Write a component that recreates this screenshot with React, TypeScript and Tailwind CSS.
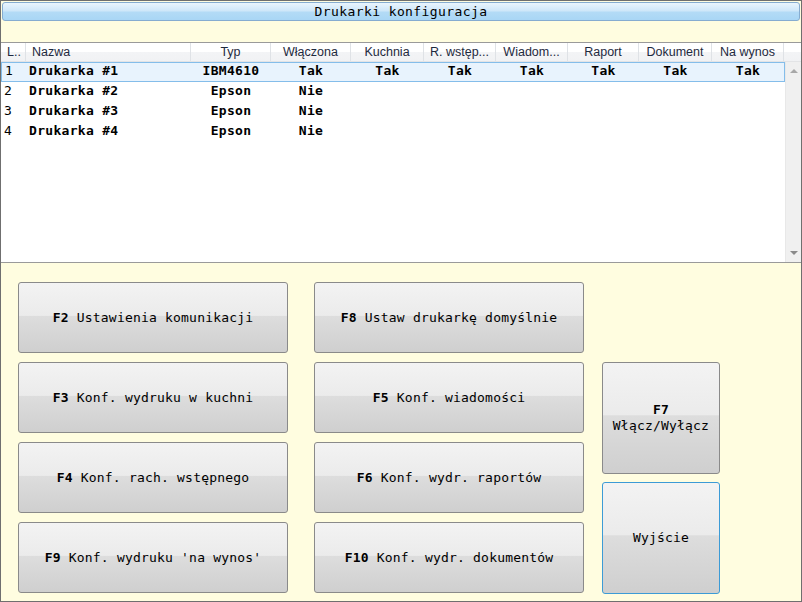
import React from "react";

const cols = [
  { label: "L..", w: 25, align: "left" },
  { label: "Nazwa", w: 165, align: "left" },
  { label: "Typ", w: 80, align: "center" },
  { label: "Włączona", w: 80, align: "center" },
  { label: "Kuchnia", w: 73, align: "center" },
  { label: "R. wstęp...", w: 72, align: "center" },
  { label: "Wiadom...", w: 72, align: "center" },
  { label: "Raport", w: 71, align: "center" },
  { label: "Dokument", w: 73, align: "center" },
  { label: "Na wynos", w: 72, align: "center" },
];

const rows = [
  ["1", "Drukarka #1", "IBM4610", "Tak", "Tak", "Tak", "Tak", "Tak", "Tak", "Tak"],
  ["2", "Drukarka #2", "Epson", "Nie", "", "", "", "", "", ""],
  ["3", "Drukarka #3", "Epson", "Nie", "", "", "", "", "", ""],
  ["4", "Drukarka #4", "Epson", "Nie", "", "", "", "", "", ""],
];

const mono = "font-['DejaVu_Sans_Mono',monospace]";

function Btn({
  k,
  text,
  h,
  focused,
  stacked,
}: {
  k: string;
  text: string;
  h: string;
  focused?: boolean;
  stacked?: boolean;
}) {
  return (
    <div
      className={`${h} w-full rounded-[3px] border ${
        focused ? "border-[#3c9bd6]" : "border-[#8a8a8a]"
      } bg-[linear-gradient(to_bottom,#f3f3f3_0%,#ebebeb_47%,#dddddd_48%,#cfcfcf_100%)] flex items-center justify-center text-black text-[13px] tracking-[0.2px] ${mono}`}
    >
      {stacked ? (
        <div className="flex flex-col items-center leading-[16px]">
          <span className="font-bold">{k}</span>
          <span>{text}</span>
        </div>
      ) : (
        <div className="whitespace-pre">
          {k && <span className="font-bold">{k} </span>}
          <span>{text}</span>
        </div>
      )}
    </div>
  );
}

export default function App() {
  return (
    <div className="w-[802px] h-[602px] bg-[#fffde0] border border-[#6f6f6f] flex flex-col overflow-hidden">
      <div className="mx-[1px] mt-[1px] h-[19px] rounded-[3px] border border-[#86acd0] bg-[linear-gradient(to_bottom,#eaf5fd_0%,#cfe7f9_45%,#b3dbf6_55%,#a9d6f5_100%)] flex items-center justify-center">
        <span className={`text-[13px] text-black tracking-[0.4px] ${mono}`}>Drukarki konfiguracja</span>
      </div>
      <div className="h-[21px]" />
      <div className="h-[221px] bg-white border-t border-b border-[#9a9a9a] flex flex-col">
        <div className="h-[19px] flex bg-[linear-gradient(to_bottom,#ffffff_0%,#ffffff_50%,#f3f4f6_51%,#f1f2f4_100%)] border-b border-[#e3e4e6] font-['Liberation_Sans',sans-serif] text-[12.5px] text-[#1e2a40]">
          {cols.map((c, i) => (
            <div
              key={i}
              style={{ width: c.w }}
              className={`shrink-0 border-r border-[#dfe2e6] flex items-center ${
                c.align === "center" ? "justify-center" : "pl-[6px]"
              } whitespace-nowrap overflow-hidden`}
            >
              {c.label}
            </div>
          ))}
          <div className="flex-1" />
        </div>
        <div className="flex flex-1 min-h-0">
          <div className="flex-1 flex flex-col">
            {rows.map((r, ri) => (
              <div
                key={ri}
                className={`h-[20px] pb-[2px] flex items-center text-[13px] text-black ${mono} ${
                  ri === 0 ? "bg-[#e8f3fd] border border-[#84bdea]" : ""
                }`}
              >
                {r.map((v, ci) => (
                  <div
                    key={ci}
                    style={{ width: cols[ci].w - (ri === 0 && ci === 0 ? 1 : 0) }}
                    className={`shrink-0 whitespace-nowrap flex ${
                      ci === 0
                        ? "pl-[3px]"
                        : ci === 1
                        ? "pl-[3px] font-bold tracking-[0.3px]"
                        : "justify-center font-bold tracking-[0.3px]"
                    }`}
                  >
                    {v}
                  </div>
                ))}
              </div>
            ))}
          </div>
          <div className="w-[17px] bg-[#f0f0f0] border-l border-[#e8e8e8] flex flex-col items-center justify-between py-[6px]">
            <svg width="8" height="5" viewBox="0 0 8 5">
              <path d="M0 5 L4 1 L8 5 Z" fill="#a8a8a8" />
            </svg>
            <svg width="8" height="5" viewBox="0 0 8 5">
              <path d="M0 0 L8 0 L4 4 Z" fill="#8a8a8a" />
            </svg>
          </div>
        </div>
      </div>
      <div className="flex pl-[17px] pt-[19px] gap-[26px]">
        <div className="w-[270px] flex flex-col gap-[9px]">
          <Btn k="F2" text="Ustawienia komunikacji" h="h-[71px]" />
          <Btn k="F3" text="Konf. wydruku w kuchni" h="h-[71px]" />
          <Btn k="F4" text="Konf. rach. wstępnego" h="h-[71px]" />
          <Btn k="F9" text="Konf. wydruku 'na wynos'" h="h-[71px]" />
        </div>
        <div className="w-[270px] flex flex-col gap-[9px]">
          <Btn k="F8" text="Ustaw drukarkę domyślnie" h="h-[71px]" />
          <Btn k="F5" text="Konf. wiadomości" h="h-[71px]" />
          <Btn k="F6" text="Konf. wydr. raportów" h="h-[71px]" />
          <Btn k="F10" text="Konf. wydr. dokumentów" h="h-[71px]" />
        </div>
        <div className="w-[118px] flex flex-col gap-[8px] pt-[80px] -ml-[8px]">
          <Btn k="F7" text="Włącz/Wyłącz" h="h-[112px]" stacked />
          <Btn k="" text="Wyjście" h="h-[112px]" focused />
        </div>
      </div>
    </div>
  );
}
